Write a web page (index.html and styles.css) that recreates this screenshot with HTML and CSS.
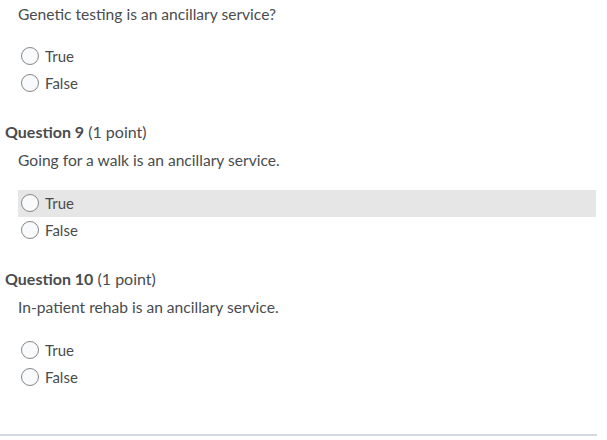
FILE: index.html
```html
<!DOCTYPE html>
<html>
<head>
<meta charset="utf-8">
<link rel="stylesheet" href="styles.css">
</head>
<body>
<div class="page">
  <section class="question first">
    <p class="q-text">Genetic testing is an ancillary service?</p>
    <ul class="options">
      <li class="option"><span class="radio"></span><span class="label">True</span></li>
      <li class="option"><span class="radio"></span><span class="label">False</span></li>
    </ul>
  </section>
  <section class="question">
    <h2 class="q-head"><strong>Question 9</strong> (1 point)</h2>
    <p class="q-text">Going for a walk is an ancillary service.</p>
    <ul class="options">
      <li class="option hover"><span class="radio"></span><span class="label">True</span></li>
      <li class="option"><span class="radio"></span><span class="label">False</span></li>
    </ul>
  </section>
  <section class="question">
    <h2 class="q-head"><strong>Question 10</strong> (1 point)</h2>
    <p class="q-text">In-patient rehab is an ancillary service.</p>
    <ul class="options">
      <li class="option"><span class="radio"></span><span class="label">True</span></li>
      <li class="option"><span class="radio"></span><span class="label">False</span></li>
    </ul>
  </section>
  <hr class="divider">
</div>
</body>
</html>
```
FILE: styles.css
```css
html, body {
  margin: 0;
  padding: 0;
  background: #fff;
}
body {
  font-family: Lato, "Open Sans", sans-serif;
  color: #494c4e;
  font-size: 15.6px;
}
.page {
  width: 597px;
  padding-top: 3px;
}
.question {
  margin: 0;
}
.q-head {
  margin: 24px 0 0 5px;
  font-size: 16px;
  font-weight: 400;
  line-height: 22px;
  height: 22px;
}
.q-head strong {
  font-weight: 700;
}
.q-text {
  margin: 6.5px 0 0 18px;
  line-height: 22px;
  height: 22px;
}
.first .q-text {
  margin-top: 0;
}
.options {
  list-style: none;
  margin: 18.5px 1px 0 18px;
  padding: 0;
}
.first .options {
  margin-top: 17.5px;
}
.option {
  display: flex;
  align-items: center;
  height: 27px;
  padding-left: 3px;
  gap: 6px;
}
.option.hover {
  background: #e6e6e6;
}
.radio {
  box-sizing: border-box;
  width: 18px;
  height: 18px;
  border: 1px solid #868686;
  border-radius: 50%;
  background: #f9fafb;
  flex: none;
}
.label {
  line-height: 22px;
  font-size: 15px;
}
.divider {
  margin: 43.5px 0 0 0;
  border: 0;
  border-top: 2px solid #d3d9e0;
  height: 0;
}
```
